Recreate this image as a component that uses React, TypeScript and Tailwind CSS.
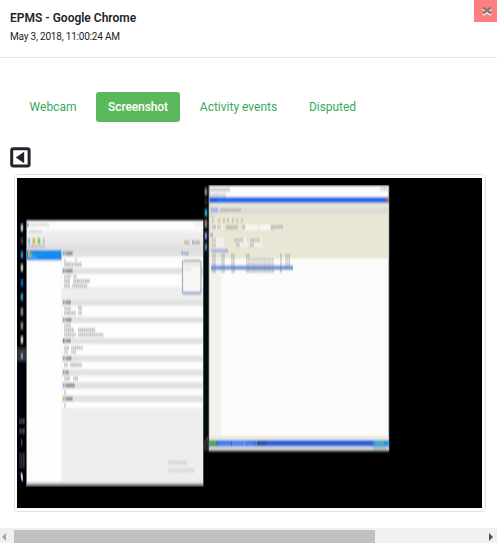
import React from "react";

type Box = [x: number, y: number, w: number, h: number];

/** A run of unreadable, downscaled text: thin strokes of uneven strength. */
function Smudge({ box, color = "#777777", strength = 0.55 }: { box: Box; color?: string; strength?: number }) {
  const [x, y, w, h] = box;
  const count = Math.max(1, Math.round(w / 2));
  return (
    <g fill={color}>
      <rect x={x} y={y} width={w} height={h} opacity={strength * 0.6} />
      {Array.from({ length: count }, (_, i) => (
        <rect key={i} x={x + i * 2} y={y + (i % 3 === 1 ? 0.6 : 0)} width={1.1} height={h - (i % 3 === 1 ? 0.6 : 0)} opacity={strength * (0.2 + ((i * 7) % 5) / 10)} />
      ))}
    </g>
  );
}

const headers: [y: number, w: number, mark: string][] = [
  [251, 7, "#6fa8dc"],
  [268.5, 7, "#5b93e0"],
  [300, 5, "#6fa8dc"],
  [317.5, 6, "#6fa8dc"],
  [338.5, 5, "#777777"],
  [356, 6, "#6fa8dc"],
  [370, 3, "#8899bb"],
  [383, 9, "#6fb6ec"],
  [396.5, 7, "#8fd060"],
];

const notes: Box[] = [
  [64, 259, 2, 3], [75, 258, 2, 3], [64, 262.5, 18, 4],
  [64, 275, 7, 3], [73, 275, 4, 3], [64, 279, 6, 4], [73, 279, 17, 4], [64, 284, 6, 3.5], [72, 284, 15, 3.5],
  [64, 307, 7, 3], [78, 306, 4, 4], [64, 311, 12, 4], [78, 311, 4, 4],
  [64, 324, 7, 3], [64, 328, 10, 4], [78, 328, 17, 4], [64, 333, 12, 3.5], [78, 333, 25, 3.5],
  [64, 346, 5, 3.5], [71, 346, 12, 3.5], [64, 350.5, 4, 3], [71, 350.5, 5, 3],
  [64, 363, 4, 4], [70, 363, 12, 4],
  [64, 376.5, 6, 4], [73, 376.5, 5, 4],
  [64, 390.5, 2, 4], [64, 403.5, 2, 4],
];

function LeftWindow() {
  return (
    <g>
      <rect x="26" y="220" width="177.6" height="266.4" fill="#777777" />
      <rect x="27" y="221" width="176" height="263.5" fill="#eeeeee" />
      <rect x="27" y="221" width="176" height="30" fill="url(#toolbar)" />
      <Smudge box={[28, 223, 21, 3.5]} color="#b8b8b8" strength={0.5} />
      <rect x="27" y="223" width="1.5" height="4" fill="#8495cf" />
      <Smudge box={[29, 230, 13, 3]} color="#aaaaaa" strength={0.4} />
      <rect x="28" y="238" width="2.2" height="6" fill="#83c7ec" />
      <rect x="32.5" y="238" width="2.6" height="6" fill="#e6ad4c" />
      <rect x="37.7" y="238" width="2.6" height="6" fill="#77ce58" />
      <rect x="43" y="238" width="1.5" height="6" fill="#bbbbbb" />
      <Smudge box={[28, 245, 17, 3]} color="#999999" />
      <Smudge box={[194, 223, 8, 3]} color="#cccccc" strength={0.4} />
      <rect x="184" y="240" width="1.5" height="4" fill="#f1b85f" />
      <Smudge box={[185.5, 240.5, 4, 4]} color="#888888" />
      <rect x="192" y="240" width="1.5" height="4" fill="#98a8d0" />
      <Smudge box={[193, 240.5, 7, 4]} color="#888888" />
      <rect x="27" y="250" width="34.5" height="231" fill="#fefefe" />
      <rect x="27" y="250" width="34.5" height="10.3" fill="#168cec" />
      <rect x="28" y="251" width="2" height="6" fill="#e5a37e" />
      <rect x="29.7" y="253" width="3" height="5" fill="#58bd92" />
      <Smudge box={[33, 255.5, 4, 3]} color="#79bbed" />
      {[[257, 11], [273, 14], [306, 11], [322.5, 16], [344, 12], [361.5, 8], [375, 7], [389, 6], [402, 6]].map(([y, h]) => (
        <rect key={y} x="62" y={y} width="141" height={h} fill="#fdfdfd" />
      ))}
      {headers.map(([y, w, mark]) => (
        <g key={y}>
          <rect x="62" y={y - 0.5} width="141" height="6" fill="#e1e1e1" />
          <rect x="63" y={y} width="1.6" height="4.5" fill={mark} />
          <Smudge box={[65.5, y + 0.2, w, 4.3]} color="#666666" strength={0.8} />
        </g>
      ))}
      {notes.map((box) => (
        <Smudge key={box.join()} box={box} color="#888888" strength={0.58} />
      ))}
      <rect x="181.5" y="251" width="1.5" height="4" fill="#78ace0" />
      <Smudge box={[183.5, 251.5, 5, 4]} color="#777777" />
      <rect x="182.5" y="260" width="18.5" height="34" rx="2" fill="#f8f8f4" stroke="#a9afb4" strokeWidth="1.2" />
      <rect x="183.5" y="260" width="17" height="2" fill="#a8bac9" />
      <rect x="183" y="291.5" width="18" height="3" fill="#a0b5d6" />
      <rect x="183" y="262.5" width="17" height="4.5" fill="#eeecdf" />
      <Smudge box={[184, 268, 7, 2.5]} color="#a9bbdd" strength={0.3} />
      <Smudge box={[168, 460.5, 19, 4.5]} color="#aaaaaa" strength={0.35} />
      <Smudge box={[168, 468, 27, 4.5]} color="#aaaaaa" strength={0.3} />
      <rect x="27" y="483.4" width="176" height="2.4" fill="#909090" />
    </g>
  );
}

function RightWindow() {
  return (
    <g>
      <rect x="208.5" y="185" width="180.8" height="266.5" fill="#777777" />
      <rect x="209.5" y="186" width="179" height="264.5" fill="#fcfcfa" />
      <rect x="209.5" y="203" width="179" height="55.5" fill="#e9e6d6" />
      <rect x="209.5" y="208" width="179" height="6" fill="#dcddd9" />
      <rect x="209.5" y="197" width="179" height="6" fill="#226ced" />
      <rect x="386" y="197.5" width="2.8" height="5" fill="#b5666f" />
      <Smudge box={[210, 188, 20, 3.5]} color="#888888" />
      <Smudge box={[210, 193.5, 16, 3]} color="#999999" />
      <Smudge box={[380, 187, 8, 3.5]} color="#aaaaaa" strength={0.5} />
      <Smudge box={[210, 198.5, 7, 3]} color="#1a4ec0" />
      <rect x="210.5" y="207.5" width="7.5" height="5" fill="#a4b8e4" />
      <Smudge box={[220, 208, 21, 4]} color="#999999" />
      <rect x="210.5" y="215" width="4" height="2" fill="#b5c8ed" />
      {[212, 218, 223, 227, 232, 236.5, 241].map((x) => (
        <Smudge key={x} box={[x, 218.5, 2, 4]} color="#929082" />
      ))}
      <Smudge box={[212, 225, 4, 4]} color="#929082" />
      <rect x="216" y="224.5" width="7" height="5.5" fill="#f4f2ec" />
      <Smudge box={[217, 225, 4, 4]} color="#929082" />
      <Smudge box={[226, 225, 12, 4.5]} color="#929082" />
      <Smudge box={[242, 225, 3, 4]} color="#929082" />
      <rect x="245" y="224.5" width="25" height="5.5" fill="#f6f5f1" />
      <rect x="258" y="224.5" width="0.7" height="5.5" fill="#dedbcf" />
      <Smudge box={[271, 225, 3, 4.5]} color="#7190ce" />
      <Smudge box={[274, 225, 9, 3.5]} color="#929082" />
      <rect x="210.5" y="233" width="2.5" height="4" fill="#98b1e9" />
      {[[212, 238], [234, 238], [250, 238], [212, 243], [236, 243], [250, 243]].map(([x, y]) => (
        <g key={`${x}-${y}`}>
          <rect x={x + 1} y={y - 0.5} width="11" height="4.5" fill="#f3f1e9" />
          <Smudge box={[x, y, 4, 4]} color="#929082" />
        </g>
      ))}
      <Smudge box={[238, 238, 5, 4]} color="#929082" />
      <Smudge box={[253, 238, 7, 4]} color="#8c98bb" />
      <Smudge box={[211, 249, 17, 3.5]} color="#6894e2" strength={0.8} />
      <rect x="209.5" y="258" width="11.5" height="180" fill="#f3f2ef" />
      <rect x="211" y="265.5" width="82" height="4.5" fill="#6f9ae0" />
      {[254, 258, 262, 266, 270].map((y, row) => (
        <g key={y}>
          {[212, 221, 231, 246].map((x) => (
            <Smudge key={x} box={[x, y, 4, 3]} color="#777777" strength={0.5} />
          ))}
          {row > 0 && <Smudge box={[250, y, 24, 3]} color="#777777" strength={0.42} />}
          <Smudge box={[280, y, 2, 3]} color="#777777" />
          {row < 4 && <Smudge box={[285, y, 5, 3]} color="#777777" strength={0.42} />}
        </g>
      ))}
      {[222, 231, 245, 279, 284, 292].map((x) => (
        <rect key={x} x={x} y="270" width="0.5" height="165" fill="#f7f6f2" />
      ))}
      <rect x="209.5" y="436" width="179" height="3.5" fill="#e9e8e0" />
      <rect x="209.5" y="440" width="179" height="6.5" fill="#2c64d8" />
      <rect x="209.5" y="440" width="7" height="6.5" fill="#58a357" />
      <rect x="218" y="440.5" width="13" height="5.5" fill="#467fea" />
      <rect x="232" y="440.5" width="11" height="5.5" fill="#4e89ee" />
      <rect x="244" y="440.5" width="10" height="5.5" fill="#467fea" />
      <rect x="256" y="440.5" width="11" height="5.5" fill="#2455b6" />
      <rect x="243.5" y="441" width="1.4" height="4.5" fill="#77aaea" />
      <rect x="255.5" y="441" width="1.4" height="4.5" fill="#719e87" />
      <rect x="373" y="440" width="15.5" height="6.5" fill="#1c99e8" />
      <Smudge box={[375, 441, 9, 4]} color="#8aae90" strength={0.8} />
      <rect x="209.5" y="447" width="179" height="3" fill="#d9dce0" />
      <Smudge box={[373, 447, 13, 3]} color="#77a7ac" />
      <rect x="209.5" y="449.8" width="179" height="1.4" fill="#8b8b8b" />
    </g>
  );
}

const trayIcons: [x: number, y: number, color: string, light: string][] = [
  [21, 225, "#777777", "#cccccc"], [21, 238, "#222222", "#3c3c3c"],
  [21, 252, "#174f7e", "#358ac0"], [21, 265, "#75784c", "#d8d8a1"],
  [21, 280, "#103f79", "#1861a8"], [21, 294, "#21547f", "#478ebc"],
  [21, 309, "#8a4940", "#529c72"], [21, 323, "#50613b", "#82904f"],
  [21, 337, "#8f8467", "#e2dfb5"], [21, 353, "#435079", "#7c9fd5"],
  [205, 189, "#555555", "#888888"], [205, 199, "#111111", "#2a2a2a"],
  [205, 210, "#156c88", "#1faacc"], [205, 221, "#855b46", "#608f60"],
  [205, 233, "#404d85", "#858fc7"], [205, 244, "#2d4766", "#607e9d"],
];

function CapturedDesktop() {
  return (
    <svg className="block h-[330px] w-[465px]" viewBox="17 178 465 330" role="img">
      <defs>
        <linearGradient id="toolbar" x1="0" y1="0" x2="0" y2="1">
          <stop offset="0" stopColor="#ffffff" />
          <stop offset="0.25" stopColor="#fafafa" />
          <stop offset="0.4" stopColor="#eeeeee" />
          <stop offset="0.65" stopColor="#e9e9e9" />
          <stop offset="1" stopColor="#dddddd" />
        </linearGradient>
        <filter id="downscale" x="0" y="0" width="1" height="1">
          <feGaussianBlur stdDeviation="0.6 0.9" />
        </filter>
      </defs>
      <rect x="17" y="178" width="465" height="330" fill="#000000" />
      <g filter="url(#downscale)">
        <rect x="17" y="219" width="9" height="267" fill="#030609" />
        <rect x="204" y="185" width="4.5" height="266" fill="#04080c" />
        <rect x="17" y="348" width="9" height="13" fill="#333333" />
        <rect x="204" y="440" width="4.5" height="11" fill="#252525" />
        <rect x="206.5" y="437" width="1.5" height="4" fill="#444444" />
        {trayIcons.map(([x, y, color, light]) => (
          <g key={`${x}-${y}`}>
            <rect x={x - 0.5} y={y - 1} width="2.8" height="7.5" fill={color} />
            <rect x={x} y={y + 1} width="1.8" height="4" fill={light} />
          </g>
        ))}
        <Smudge box={[19, 419, 6, 4.5]} color="#888888" strength={0.5} />
        <Smudge box={[19, 429, 6, 4.5]} color="#888888" strength={0.5} />
        <rect x="21" y="440" width="1.3" height="5" fill="#555555" />
        <Smudge box={[19, 453, 6, 15]} color="#777777" strength={0.38} />
        <path d="M20.5 473l2 1 .7 7-2-2z" fill="#dddddd" />
        <LeftWindow />
        <RightWindow />
      </g>
    </svg>
  );
}

const tabs = [
  { label: "Webcam", style: "w-[70px] text-[#39a85a]" },
  { label: "Screenshot", style: "w-[84px] rounded-[3px] bg-[#5cb85c] font-medium tracking-[-0.1px] text-white" },
  { label: "Activity events", style: "w-[101px] text-[#39a85a]" },
  { label: "Disputed", style: "w-[71px] tracking-[-0.05px] text-[#39a85a]" },
];

export default function App() {
  return (
    <div className="flex h-[543px] w-[497px] flex-col overflow-hidden bg-white font-['Roboto',sans-serif] text-[#212529]">
      <header className="flex h-[58px] shrink-0 justify-between border-b border-[#e9e9e9]">
        <div className="pt-[10px] pl-[10px]">
          <h1 className="text-[12px] leading-4 font-semibold whitespace-nowrap">EPMS - Google Chrome</h1>
          <p className="mt-[4px] text-[10px] leading-[14px] tracking-[-0.2px] whitespace-nowrap">May 3, 2018, 11:00:24 AM</p>
        </div>
        <button className="flex h-[22px] w-[23px] items-center justify-center bg-[#ff7f7f]" aria-label="Close">
          <svg className="ml-0.5 h-[10px] w-[10px]" viewBox="0 0 10 10">
            <path d="M1 2.8L9 9M9 2.8L1 9" stroke="#ffffff" strokeWidth="2.2" />
            <path d="M1 1.5L9 7.5M9 1.5L1 7.5" stroke="#7c7c7c" strokeWidth="2.2" />
          </svg>
        </button>
      </header>

      <nav className="mt-[34px] flex h-[30px] shrink-0 gap-[8px] pl-[18px] text-[12px] leading-[30px]">
        {tabs.map(({ label, style }) => (
          <button key={label} className={`text-center whitespace-nowrap ${style}`}>{label}</button>
        ))}
      </nav>

      <button className="mt-[25px] ml-[10px] h-[21px] w-[21px] shrink-0" aria-label="Previous">
        <svg className="block h-[21px] w-[21px]" viewBox="0 0 21 21">
          <rect x="1.7" y="1.7" width="17.4" height="17.4" rx="1.8" fill="none" stroke="#212529" strokeWidth="3" />
          <path d="M14.2 4.8v11.4L5.8 10.5z" fill="#212529" />
        </svg>
      </button>

      <div className="mt-[6px] ml-[14px] h-[338px] w-[472px] shrink-0 rounded-[4px] border border-[#dee2e6] py-[3px] pl-[2px]">
        <CapturedDesktop />
      </div>

      <div className="mt-auto flex h-[15px] shrink-0 items-end bg-[#f0f0f0]">
        <div className="flex h-[15px] w-[14px] items-center pt-[2px] pl-[2px]">
          <div className="h-0 w-0 border-y-[4px] border-r-[4px] border-y-transparent border-r-[#a3a3a3]" />
        </div>
        <div className="h-[13px] w-[361px] bg-[#c1c1c1]" />
        <div className="ml-auto flex h-[15px] w-[8px] items-center pt-[2px]">
          <div className="h-0 w-0 border-y-[4px] border-l-[4px] border-y-transparent border-l-[#505050]" />
        </div>
      </div>
    </div>
  );
}
